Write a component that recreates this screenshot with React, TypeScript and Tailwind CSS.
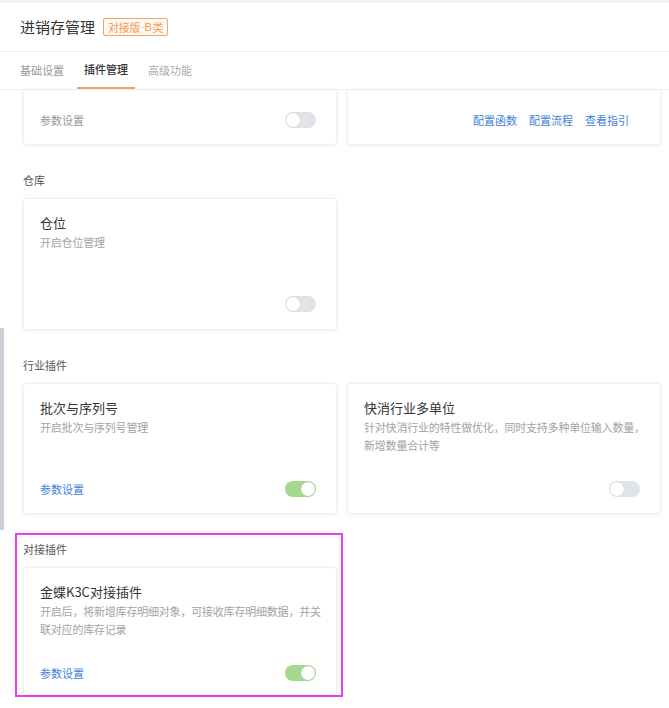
import React from "react";

const FONT = { fontFamily: '"Noto Sans CJK SC", "Noto Sans", sans-serif' };

function Toggle({ on }: { on?: boolean }) {
  return (
    <span
      className={`relative inline-block w-[31px] h-[16px] rounded-full ${
        on ? "bg-[#a5d78f]" : "bg-[#e0e3e8]"
      }`}
    >
      <span
        className={`absolute top-[1px] w-[14px] h-[14px] rounded-full bg-white shadow-[0_0_1px_rgba(0,0,0,0.2)] ${
          on ? "right-[1px]" : "left-[1px]"
        }`}
      />
    </span>
  );
}

function SectionLabel({ children, top = "pt-[28px]" }: { children: React.ReactNode; top?: string }) {
  return (
    <div className={`${top} pb-[11px] text-[11px] leading-[14px] text-[#555]`}>{children}</div>
  );
}

interface CardProps {
  title: string;
  desc: string[];
  link?: string;
  on?: boolean;
  height: string;
  pb?: string;
}

function PluginCard({ title, desc, link, on, height, pb = "pb-[16px]" }: CardProps) {
  return (
    <div
      className={`${height} ${pb} flex flex-col bg-white rounded-[3px] border border-[#f0f0f0] shadow-[0_1px_4px_rgba(0,0,0,0.07)] pt-[15px] pl-[16px] pr-[20px]`}
    >
      <div className="text-[13px] leading-[18px] text-[#333]">{title}</div>
      <div className="mt-[1px] text-[11px] leading-[18px] text-[#a3a3a3] tracking-[-0.2px]">
        {desc.map((d) => (
          <div key={d} className="whitespace-nowrap">
            {d}
          </div>
        ))}
      </div>
      <div className="mt-auto flex items-center justify-between h-[16px]">
        <span className="text-[11px] text-[#3f7fd9]">{link}</span>
        <Toggle on={on} />
      </div>
    </div>
  );
}

export default function App() {
  return (
    <div className="relative min-h-[708px] bg-white" style={FONT}>
      <div className="h-[3px] bg-[#f3f3f3]" />
      <div className="h-[49px] border-b border-[#efefef] flex items-center pl-[20px] gap-[8px]">
        <span className="text-[15px] text-[#333]">进销存管理</span>
        <span className="h-[18px] px-[4px] flex items-center border border-[#f3a566] rounded-[2px] text-[11px] text-[#f2994a] bg-[#fffaf5] tracking-[-0.3px]">
          对接版<span className="font-['Liberation_Sans'] px-[1px]">·B</span>类
        </span>
      </div>
      <div className="h-[38px] border-b border-[#efefef] flex pl-[13px] gap-[6px] text-[11px]">
        <div className="px-[7px] flex items-center text-[#999]">基础设置</div>
        <div className="px-[7px] flex items-center text-[#333] font-medium border-b-2 border-[#f2a468]">
          插件管理
        </div>
        <div className="px-[7px] flex items-center text-[#aaa]">高级功能</div>
      </div>

      <div className="pl-[23px] pr-[8px]">
        <div className="grid grid-cols-2 gap-[10px]">
          <div className="h-[55px] bg-white rounded-b-[3px] border border-t-0 border-[#f0f0f0] shadow-[0_1px_4px_rgba(0,0,0,0.07)] flex items-end pb-[16px] pl-[16px] pr-[20px]">
            <div className="w-full h-[16px] flex items-center justify-between">
              <span className="text-[11px] text-[#999]">参数设置</span>
              <Toggle />
            </div>
          </div>
          <div className="h-[55px] bg-white rounded-b-[3px] border border-t-0 border-[#f0f0f0] shadow-[0_1px_4px_rgba(0,0,0,0.07)] flex items-end justify-end pb-[16px] pr-[31px]">
            <div className="h-[16px] flex items-center gap-[12px] text-[11px] text-[#3f7fd9]">
              <span>配置函数</span>
              <span>配置流程</span>
              <span>查看指引</span>
            </div>
          </div>
        </div>

        <SectionLabel>仓库</SectionLabel>
        <div className="grid grid-cols-2 gap-[10px]">
          <PluginCard title="仓位" desc={["开启仓位管理"]} height="h-[132px]" pb="pb-[17px]" />
        </div>

        <SectionLabel>行业插件</SectionLabel>
        <div className="grid grid-cols-2 gap-[10px]">
          <PluginCard
            title="批次与序列号"
            desc={["开启批次与序列号管理"]}
            link="参数设置"
            on
            height="h-[131px]"
          />
          <PluginCard
            title="快消行业多单位"
            desc={["针对快消行业的特性做优化，同时支持多种单位输入数量，", "新增数量合计等"]}
            height="h-[131px]"
          />
        </div>
      </div>

      <div className="ml-[15px] mt-[19px] w-[328px] border-2 border-[#ee3bee] pl-[6px] pr-[4px]">
        <SectionLabel top="pt-[7px]">对接插件</SectionLabel>
        <PluginCard
          title="金蝶K3C对接插件"
          desc={["开启后，将新增库存明细对象，可接收库存明细数据，并关", "联对应的库存记录"]}
          link="参数设置"
          on
          height="h-[128px]"
          pb="pb-[13px]"
        />
      </div>

      <div className="absolute left-0 top-[328px] w-[4px] h-[202px] bg-[#c9d0d8]" />
    </div>
  );
}
